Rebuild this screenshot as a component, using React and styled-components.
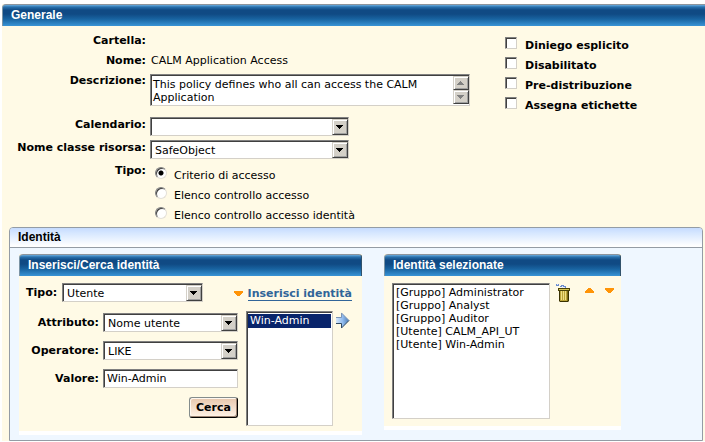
import React, { useState } from 'react';
import styled, { createGlobalStyle, css } from 'styled-components';

const GlobalStyle = createGlobalStyle`
  * {
    box-sizing: border-box;
  }

  body {
    margin: 0;
    background: #fff;
    color: #000;
    font: 11px/13px Verdana, "DejaVu Sans", sans-serif;
  }

  input, select, textarea, button {
    font: inherit;
    color: inherit;
    margin: 0;
  }
`;

const sunken = css`
  border: 1px solid;
  border-color: #808080 #d4d0c8 #d4d0c8 #808080;
  box-shadow: inset 1px 1px 0 #404040;
  border-radius: 0;
  background: #fff;
  outline: none;
`;

const Page = styled.main`
  padding: 4px 0 0 2px;
`;

const BlueTitle = styled.h2`
  height: 22px;
  margin: 0;
  padding: 0 8px;
  border-top: 1px solid #8c949c;
  border-left: 1px solid #7b94a5;
  border-right: ${({ $closed }) => ($closed ? '1px solid #31526b' : '0')};
  border-radius: 4px ${({ $closed }) => ($closed ? '3px' : '0')} 0 0;
  background: linear-gradient(#6bade0 0, #2971ad 2px, #104a84 5px, #104a84 9px, #1863a0 14px, #3994d6 21px);
  color: #fff;
  font: bold 12px/21px Arial, "Liberation Sans", sans-serif;
`;

const General = styled.section`
  background: #fffae6;
`;

const GeneralBody = styled.div`
  display: flex;
  justify-content: space-between;
  gap: 35px;
  padding: 5px 0 2px;
`;

const Fields = styled.div`
  display: grid;
  grid-template-columns: 144px 320px;
  grid-template-rows: 20px 20px 44px 23px 23px auto;
  column-gap: 4px;
`;

const Caption = styled.label`
  font-weight: bold;
  line-height: 20px;
  text-align: right;
  white-space: nowrap;
`;

const Value = styled.div`
  line-height: 20px;
  padding-left: 1px;
`;

const Field = styled.div`
  padding-top: ${({ $top }) => $top || 2}px;
`;

const AreaBox = styled.div`
  position: relative;
  height: 32px;
`;

const Area = styled.textarea`
  ${sunken}
  display: block;
  width: 100%;
  height: 32px;
  padding: 3px 18px 0 2px;
  resize: none;
  overflow: hidden;
`;

const Spinner = styled.div`
  position: absolute;
  top: 2px;
  right: 1px;
  display: flex;
  flex-direction: column;
`;

const SelectBox = styled.span`
  position: relative;
  display: block;
  width: ${({ $width }) => $width}px;
  height: 19px;
`;

const Combo = styled.select`
  ${sunken}
  appearance: none;
  display: block;
  width: 100%;
  height: 19px;
  padding: 1px 18px 0 4px;
`;

const Bevel = styled.svg`
  display: block;
  width: 16px;
  height: ${({ $height }) => $height}px;
  border: 1px solid;
  border-color: #d4d0c8 #404040 #404040 #d4d0c8;
  box-shadow: inset 1px 1px 0 #fff, inset -1px -1px 0 #a0a0a0;
  background: #d4d0c8;
  pointer-events: none;
`;

const ComboArrow = styled.span`
  position: absolute;
  top: 2px;
  right: 1px;
`;

const Choices = styled.div`
  padding: 4px 0 0 5px;
`;

const Choice = styled.label`
  display: flex;
  gap: ${({ $gap }) => $gap || 7}px;
  height: 20px;
  padding-top: 2px;
  line-height: 18px;
  font-weight: ${({ $bold }) => ($bold ? 'bold' : 'normal')};
  white-space: nowrap;
`;

const Radio = styled.input`
  ${sunken}
  appearance: none;
  flex: none;
  width: 12px;
  height: 12px;
  border-radius: 50%;
  border-color: #808080 #e4e0d8 #e4e0d8 #808080;
  &:checked {
    background: radial-gradient(circle, #000 2px, #fff 3px);
  }
`;

const Check = styled.input`
  ${sunken}
  appearance: none;
  flex: none;
  width: 12px;
  height: 12px;
  &:checked {
    background: radial-gradient(circle, #000 3px, #fff 4px);
  }
`;

const Flags = styled.div`
  flex: 1;
  padding-top: 4px;
`;

const Identity = styled.section`
  margin: 0 2px 0 7px;
  border: 1px solid #949ca5;
  border-radius: 4px 4px 0 0;
  background: #eff7ff;
`;

const IdentityTitle = styled.h2`
  height: 20px;
  margin: 0;
  padding: 0 8px;
  border-bottom: 1px solid #949ca5;
  border-radius: 3px 3px 0 0;
  background: linear-gradient(#c6dbff 0, #d6e7ff 5px, #fff 18px);
  font: bold 12px/19px Arial, "Liberation Sans", sans-serif;
`;

const Panels = styled.div`
  display: flex;
  align-items: flex-start;
  gap: 22px;
  padding: 6px 9px 5px;
`;

const Panel = styled.section`
  width: ${({ $width }) => $width}px;
  border-bottom: 4px solid #fff;
  background: #fffae6;
`;

const SearchBody = styled.div`
  padding: 7px 10px 5px 7px;
`;

const TypeRow = styled.div`
  display: flex;
  align-items: center;
  gap: 5px;
  height: 19px;
`;

const InsertLink = styled.a`
  display: flex;
  align-items: center;
  gap: 5px;
  margin-left: auto;
  padding-top: 2px;
  color: #316599;
  font-weight: bold;
  text-decoration: none;
  white-space: nowrap;
  span {
    border-bottom: 1px solid #316599;
  }
`;

const SearchRow = styled.div`
  display: flex;
  align-items: flex-start;
  gap: 3px;
  padding-top: 9px;
`;

const SearchForm = styled.form`
  display: grid;
  grid-template-columns: 73px 135px;
  gap: 8px 4px;
  padding: 2px 5px 0 0;
`;

const TextBox = styled.input`
  ${sunken}
  width: 100%;
  height: 19px;
  padding: 0 3px;
`;

const SearchButton = styled.button`
  grid-column: 2;
  justify-self: end;
  width: 49px;
  height: 21px;
  padding: 0;
  border: 1px solid;
  border-color: #848c8c #000 #000 #848c8c;
  border-radius: 3px;
  box-shadow: inset 1px 1px 0 #fff7ef, inset -1px -1px 0 #9c8473;
  background: linear-gradient(#e7c7ad, #fff3e7);
  font-weight: bold;
`;

const ListBox = styled.select`
  ${sunken}
  flex: none;
  width: ${({ $width }) => $width}px;
  height: ${({ $height }) => $height}px;
  padding: 2px 1px;
  overflow: hidden;
  option {
    height: ${({ $row }) => $row}px;
    min-height: 0;
    padding: 0 2px;
    line-height: ${({ $row }) => $row}px;
  }
  option:checked {
    background: #08246b linear-gradient(#08246b, #08246b);
    color: #fff;
    -webkit-text-fill-color: #fff;
  }
`;

const SelectedBody = styled.div`
  display: flex;
  align-items: flex-start;
  padding: 7px 7px 7px 8px;
`;

const IconButton = styled.button`
  display: flex;
  padding: 0;
  border: 0;
  background: none;
`;

const Tools = styled.div`
  display: flex;
  flex: 1;
  justify-content: space-between;
  align-items: flex-start;
  padding: 0 0 0 6px;
`;

const MoveButtons = styled.div`
  display: flex;
  gap: 11px;
  padding-top: 5px;
`;

function Triangle({ up }) {
  return (
    <svg width="9" height="5" viewBox="0 0 9 5" shapeRendering="crispEdges">
      <path d={ up ? 'M0 5V3L4 0H5L9 3V5Z' : 'M0 0H9V2L5 5H4L0 2Z' } fill="#ff9408" />
    </svg>
  );
}

function Dropdown({ id, width, value }) {
  return (
    <SelectBox $width={ width }>
      <Combo id={ id } defaultValue={ value }>
        <option value={ value }>{value}</option>
      </Combo>
      <ComboArrow>
        <Bevel $height={ 16 } viewBox="0 0 14 14" shapeRendering="crispEdges">
          <path d="M3 5H10V6H9V7H8V8H7V9H6V8H5V7H4V6H3Z" />
        </Bevel>
      </ComboArrow>
    </SelectBox>
  );
}

function ArrowRight() {
  return (
    <svg width="14" height="19" viewBox="0 0 14 19">
      <defs>
        <linearGradient id="arrow" x1="0" y1="0" x2="1" y2="0">
          <stop offset="0" stopColor="#d6e7fa" />
          <stop offset="0.5" stopColor="#94bdef" />
          <stop offset="1" stopColor="#4a7bb5" />
        </linearGradient>
      </defs>
      <path d="M0 6H5V1.500L13 9.500L5 17.500V13H0Z" fill="url(#arrow)" />
      <path d="M0 6.500H5.500V2L13 9.500" fill="none" stroke="#7b94b5" />
      <path d="M0 12.500H5.500V17L13 9.500" fill="none" stroke="#314a63" />
    </svg>
  );
}

function Trash() {
  return (
    <svg width="15" height="19" viewBox="0 0 15 19">
      <path d="M0 1H3V3H0ZM5 2H8V4H5ZM4 3H6V4H4ZM8 3H10V5H8Z" fill="#6b8cce" />
      <path d="M1 1H2V2H1ZM6 3H7V5H6ZM8 4H9V5H8Z" fill="#dee7ff" />
      <path d="M3 6H13V18L12 19H4L3 18Z" fill="#393100" />
      <path d="M4 8H12V18H4Z" fill="#bda539" />
      <path d="M5 8H6V17H5ZM7 8H8V17H7ZM9 8H10V17H9Z" fill="#efdf84" />
      <path d="M11 8H12V18H11Z" fill="#7b6b18" />
      <path d="M2 5H14V8H2Z" fill="#4a4208" />
      <path d="M3 6H13V7H3Z" fill="#d6c652" />
    </svg>
  );
}

const types = [
  'Criterio di accesso',
  'Elenco controllo accesso',
  'Elenco controllo accesso identità',
];

const flags = ['Diniego esplicito', 'Disabilitato', 'Pre-distribuzione', 'Assegna etichette'];

const selectedIdentities = [
  '[Gruppo] Administrator',
  '[Gruppo] Analyst',
  '[Gruppo] Auditor',
  '[Utente] CALM_API_UT',
  '[Utente] Win-Admin',
];

function App() {
  const [type, setType] = useState(types[0]);

  return (
    <Page>
      <GlobalStyle />
      <General>
        <BlueTitle>Generale</BlueTitle>
        <GeneralBody>
          <Fields>
            <Caption as="span">Cartella:</Caption>
            <Value />
            <Caption as="span">Nome:</Caption>
            <Value>CALM Application Access</Value>
            <Caption htmlFor="description">Descrizione:</Caption>
            <Field $top={ 3 }>
              <AreaBox>
                <Area
                  id="description"
                  defaultValue="This policy defines who all can access the CALM Application"
                />
                <Spinner>
                  <Bevel $height={ 14 } viewBox="0 0 14 12" shapeRendering="crispEdges">
                    <path d="M6 4H7V5H8V6H9V7H10V8H3V7H4V6H5V5H6Z" fill="#808080" />
                  </Bevel>
                  <Bevel $height={ 14 } viewBox="0 0 14 12" shapeRendering="crispEdges">
                    <path d="M3 4H10V5H9V6H8V7H7V8H6V7H5V6H4V5H3Z" fill="#808080" />
                  </Bevel>
                </Spinner>
              </AreaBox>
            </Field>
            <Caption htmlFor="calendar">Calendario:</Caption>
            <Field><Dropdown id="calendar" width={ 199 } value="" /></Field>
            <Caption htmlFor="resource">Nome classe risorsa:</Caption>
            <Field><Dropdown id="resource" width={ 199 } value="SafeObject" /></Field>
            <Caption as="span">Tipo:</Caption>
            <Choices>
              {types.map((name) => (
                <Choice key={ name }>
                  <Radio
                    type="radio"
                    name="type"
                    checked={ type === name }
                    onChange={ () => setType(name) }
                  />
                  {name}
                </Choice>
              ))}
            </Choices>
          </Fields>
          <Flags>
            {flags.map((name) => (
              <Choice key={ name } $bold $gap={ 8 }>
                <Check type="checkbox" />
                {name}
              </Choice>
            ))}
          </Flags>
        </GeneralBody>

        <Identity>
          <IdentityTitle>Identità</IdentityTitle>
          <Panels>
            <Panel $width={ 343 }>
              <BlueTitle $closed>Inserisci/Cerca identità</BlueTitle>
              <SearchBody>
                <TypeRow>
                  <Caption htmlFor="identityType">Tipo:</Caption>
                  <Dropdown id="identityType" width={ 141 } value="Utente" />
                  <InsertLink href="#inserisci">
                    <Triangle />
                    <span>Inserisci identità</span>
                  </InsertLink>
                </TypeRow>
                <SearchRow>
                  <SearchForm onSubmit={ (e) => e.preventDefault() }>
                    <Caption htmlFor="attribute">Attributo:</Caption>
                    <Dropdown id="attribute" width={ 135 } value="Nome utente" />
                    <Caption htmlFor="operator">Operatore:</Caption>
                    <Dropdown id="operator" width={ 135 } value="LIKE" />
                    <Caption htmlFor="value">Valore:</Caption>
                    <TextBox id="value" type="text" defaultValue="Win-Admin" />
                    <SearchButton type="submit">Cerca</SearchButton>
                  </SearchForm>
                  <ListBox
                    aria-label="Risultati"
                    multiple
                    defaultValue={ ['Win-Admin'] }
                    $width={ 87 }
                    $height={ 115 }
                    $row={ 14 }
                  >
                    <option>Win-Admin</option>
                  </ListBox>
                  <IconButton type="button" aria-label="Aggiungi"><ArrowRight /></IconButton>
                </SearchRow>
              </SearchBody>
            </Panel>

            <Panel $width={ 237 }>
              <BlueTitle $closed>Identità selezionate</BlueTitle>
              <SelectedBody>
                <ListBox
                  aria-label="Identità selezionate"
                  multiple
                  $width={ 158 }
                  $height={ 136 }
                  $row={ 13 }
                >
                  {selectedIdentities.map((name) => <option key={ name }>{name}</option>)}
                </ListBox>
                <Tools>
                  <IconButton type="button" aria-label="Elimina"><Trash /></IconButton>
                  <MoveButtons>
                    <IconButton type="button" aria-label="Su"><Triangle up /></IconButton>
                    <IconButton type="button" aria-label="Giù"><Triangle /></IconButton>
                  </MoveButtons>
                </Tools>
              </SelectedBody>
            </Panel>
          </Panels>
        </Identity>
      </General>
    </Page>
  );
}

export default App;
